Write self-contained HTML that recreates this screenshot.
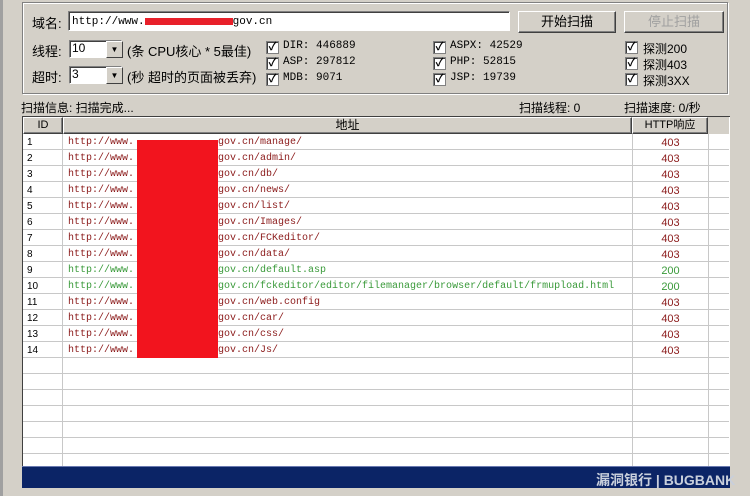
<!DOCTYPE html>
<html><head><meta charset="utf-8"><style>
html,body{margin:0;width:750px;height:496px;overflow:hidden}
body{background:#d4d0c8;position:relative;font-family:"Liberation Sans","Noto Sans CJK SC",sans-serif;font-size:12px;color:#000}
.a{position:absolute;white-space:nowrap}
.mono{font-family:"Liberation Mono","Noto Sans CJK SC",monospace}
.grp{left:22px;top:2px;width:704px;height:90px;border:1px solid #808080;box-shadow:1px 1px 0 #fff inset,1px 1px 0 #fff}
.in{background:#fff;border:1px solid #808080;border-right-color:#fff;border-bottom-color:#fff;box-shadow:inset 1px 1px 0 #404040}
.btn{background:#d4d0c8;border:1px solid;border-color:#fff #404040 #404040 #fff;box-shadow:inset -1px -1px 0 #808080;text-align:center;line-height:20px;font-size:13px}
.cb{width:11px;height:11px;background:#fff;border:1px solid #808080;box-shadow:inset 1px 1px 0 #404040;font-size:11px;line-height:11px;text-align:center;font-weight:bold}
.dd{width:15px;height:15px;background:#d4d0c8;border:1px solid;border-color:#fff #404040 #404040 #fff;font-size:8px;text-align:center;line-height:15px}
.row{position:absolute;left:23px;width:706px;height:16px;border-bottom:1px solid #c8c8c8;box-sizing:border-box;font-size:10px;line-height:18px}
.row span{position:absolute;white-space:pre}
.row span.c{left:610px;width:75px;text-align:center;font-size:11px}
</style></head><body>
<div class="a" style="left:0;top:0;width:3px;height:496px;background:#a0a0a0"></div>
<div class="a grp"></div>
<div class="a" style="left:32px;top:13px;font-size:13px">域名:</div>
<div class="a in mono" style="left:68px;top:11px;width:442px;height:20px;line-height:20px;font-size:11px;padding-left:3px;box-sizing:border-box">http://www.<span style="display:inline-block;width:88px;height:7px;background:#e8202a;vertical-align:middle"></span>gov.cn</div>
<div class="a btn" style="left:518px;top:11px;width:96px;height:20px">开始扫描</div>
<div class="a btn" style="left:624px;top:11px;width:98px;height:20px;color:#a0a0a0">停止扫描</div>

<div class="a" style="left:32px;top:41px;font-size:13px">线程:</div>
<div class="a in" style="left:69px;top:40px;width:53px;height:18px;box-sizing:border-box;font-size:12px;padding-left:2px">10</div>
<div class="a dd" style="left:106px;top:41px">▼</div>
<div class="a" style="left:127px;top:41px;font-size:13px">(条 CPU核心 * 5最佳)</div>
<div class="a" style="left:32px;top:67px;font-size:13px">超时:</div>
<div class="a in" style="left:69px;top:66px;width:53px;height:18px;box-sizing:border-box;font-size:12px;padding-left:2px">3</div>
<div class="a dd" style="left:106px;top:67px">▼</div>
<div class="a" style="left:127px;top:67px;font-size:13px">(秒 超时的页面被丢弃)</div>

<div class="a cb" style="left:266px;top:41px">✓</div><div class="a mono" style="left:283px;top:40px;font-size:11px">DIR: 446889</div>
<div class="a cb" style="left:266px;top:57px">✓</div><div class="a mono" style="left:283px;top:56px;font-size:11px">ASP: 297812</div>
<div class="a cb" style="left:266px;top:73px">✓</div><div class="a mono" style="left:283px;top:72px;font-size:11px">MDB: 9071</div>
<div class="a cb" style="left:433px;top:41px">✓</div><div class="a mono" style="left:450px;top:40px;font-size:11px">ASPX: 42529</div>
<div class="a cb" style="left:433px;top:57px">✓</div><div class="a mono" style="left:450px;top:56px;font-size:11px">PHP: 52815</div>
<div class="a cb" style="left:433px;top:73px">✓</div><div class="a mono" style="left:450px;top:72px;font-size:11px">JSP: 19739</div>
<div class="a cb" style="left:625px;top:41px">✓</div><div class="a" style="left:643px;top:40px;font-size:12px">探测200</div>
<div class="a cb" style="left:625px;top:57px">✓</div><div class="a" style="left:643px;top:56px;font-size:12px">探测403</div>
<div class="a cb" style="left:625px;top:73px">✓</div><div class="a" style="left:643px;top:72px;font-size:12px">探测3XX</div>

<div class="a" style="left:21px;top:99px;font-size:12px">扫描信息: 扫描完成...</div>
<div class="a" style="left:519px;top:99px;font-size:12px">扫描线程: 0</div>
<div class="a" style="left:624px;top:99px;font-size:12px">扫描速度: 0/秒</div>

<div class="a" style="left:22px;top:116px;width:708px;height:350px;background:#fff;border-left:1px solid #404040;border-top:1px solid #404040;box-sizing:border-box"></div>
<div class="a" style="left:23px;top:117px;width:706px;height:17px;background:#d4d0c8"></div>
<div class="a btn" style="left:23px;top:117px;width:38px;height:15px;line-height:15px;font-size:11px">ID</div>
<div class="a btn" style="left:63px;top:117px;width:567px;height:15px;line-height:15px;font-size:12px">地址</div>
<div class="a btn" style="left:632px;top:117px;width:74px;height:15px;line-height:15px;font-size:11px">HTTP响应</div>
<div class="a" style="left:62px;top:134px;width:1px;height:332px;background:#c8c8c8"></div>
<div class="a" style="left:632px;top:134px;width:1px;height:332px;background:#c8c8c8"></div>
<div class="a" style="left:708px;top:134px;width:1px;height:332px;background:#c8c8c8"></div>

<div class="row" style="top:134px"><span style="left:4px">1</span><span class="mono" style="left:45px;color:#8b1a1a">http://www.              gov.cn/manage/</span><span class="c" style="color:#8b1a1a">403</span></div>
<div class="row" style="top:150px"><span style="left:4px">2</span><span class="mono" style="left:45px;color:#8b1a1a">http://www.              gov.cn/admin/</span><span class="c" style="color:#8b1a1a">403</span></div>
<div class="row" style="top:166px"><span style="left:4px">3</span><span class="mono" style="left:45px;color:#8b1a1a">http://www.              gov.cn/db/</span><span class="c" style="color:#8b1a1a">403</span></div>
<div class="row" style="top:182px"><span style="left:4px">4</span><span class="mono" style="left:45px;color:#8b1a1a">http://www.              gov.cn/news/</span><span class="c" style="color:#8b1a1a">403</span></div>
<div class="row" style="top:198px"><span style="left:4px">5</span><span class="mono" style="left:45px;color:#8b1a1a">http://www.              gov.cn/list/</span><span class="c" style="color:#8b1a1a">403</span></div>
<div class="row" style="top:214px"><span style="left:4px">6</span><span class="mono" style="left:45px;color:#8b1a1a">http://www.              gov.cn/Images/</span><span class="c" style="color:#8b1a1a">403</span></div>
<div class="row" style="top:230px"><span style="left:4px">7</span><span class="mono" style="left:45px;color:#8b1a1a">http://www.              gov.cn/FCKeditor/</span><span class="c" style="color:#8b1a1a">403</span></div>
<div class="row" style="top:246px"><span style="left:4px">8</span><span class="mono" style="left:45px;color:#8b1a1a">http://www.              gov.cn/data/</span><span class="c" style="color:#8b1a1a">403</span></div>
<div class="row" style="top:262px"><span style="left:4px">9</span><span class="mono" style="left:45px;color:#3a9a3a">http://www.              gov.cn/default.asp</span><span class="c" style="color:#3a9a3a">200</span></div>
<div class="row" style="top:278px"><span style="left:4px">10</span><span class="mono" style="left:45px;color:#3a9a3a">http://www.              gov.cn/fckeditor/editor/filemanager/browser/default/frmupload.html</span><span class="c" style="color:#3a9a3a">200</span></div>
<div class="row" style="top:294px"><span style="left:4px">11</span><span class="mono" style="left:45px;color:#8b1a1a">http://www.              gov.cn/web.config</span><span class="c" style="color:#8b1a1a">403</span></div>
<div class="row" style="top:310px"><span style="left:4px">12</span><span class="mono" style="left:45px;color:#8b1a1a">http://www.              gov.cn/car/</span><span class="c" style="color:#8b1a1a">403</span></div>
<div class="row" style="top:326px"><span style="left:4px">13</span><span class="mono" style="left:45px;color:#8b1a1a">http://www.              gov.cn/css/</span><span class="c" style="color:#8b1a1a">403</span></div>
<div class="row" style="top:342px"><span style="left:4px">14</span><span class="mono" style="left:45px;color:#8b1a1a">http://www.              gov.cn/Js/</span><span class="c" style="color:#8b1a1a">403</span></div>
<div class="row" style="top:358px"></div><div class="row" style="top:374px"></div><div class="row" style="top:390px"></div><div class="row" style="top:406px"></div><div class="row" style="top:422px"></div><div class="row" style="top:438px"></div>
<div class="a" style="left:137px;top:140px;width:81px;height:218px;background:#f2141e"></div>

<div class="a" style="left:22px;top:466px;width:708px;height:22px;background:#0b2466;border-top:1px solid #6a7ab0;box-sizing:border-box"></div>
<div class="a" style="left:596px;top:470px;color:#c8cfdc;font-size:14px;font-weight:bold">漏洞银行 | BUGBANK</div>
</body></html>
